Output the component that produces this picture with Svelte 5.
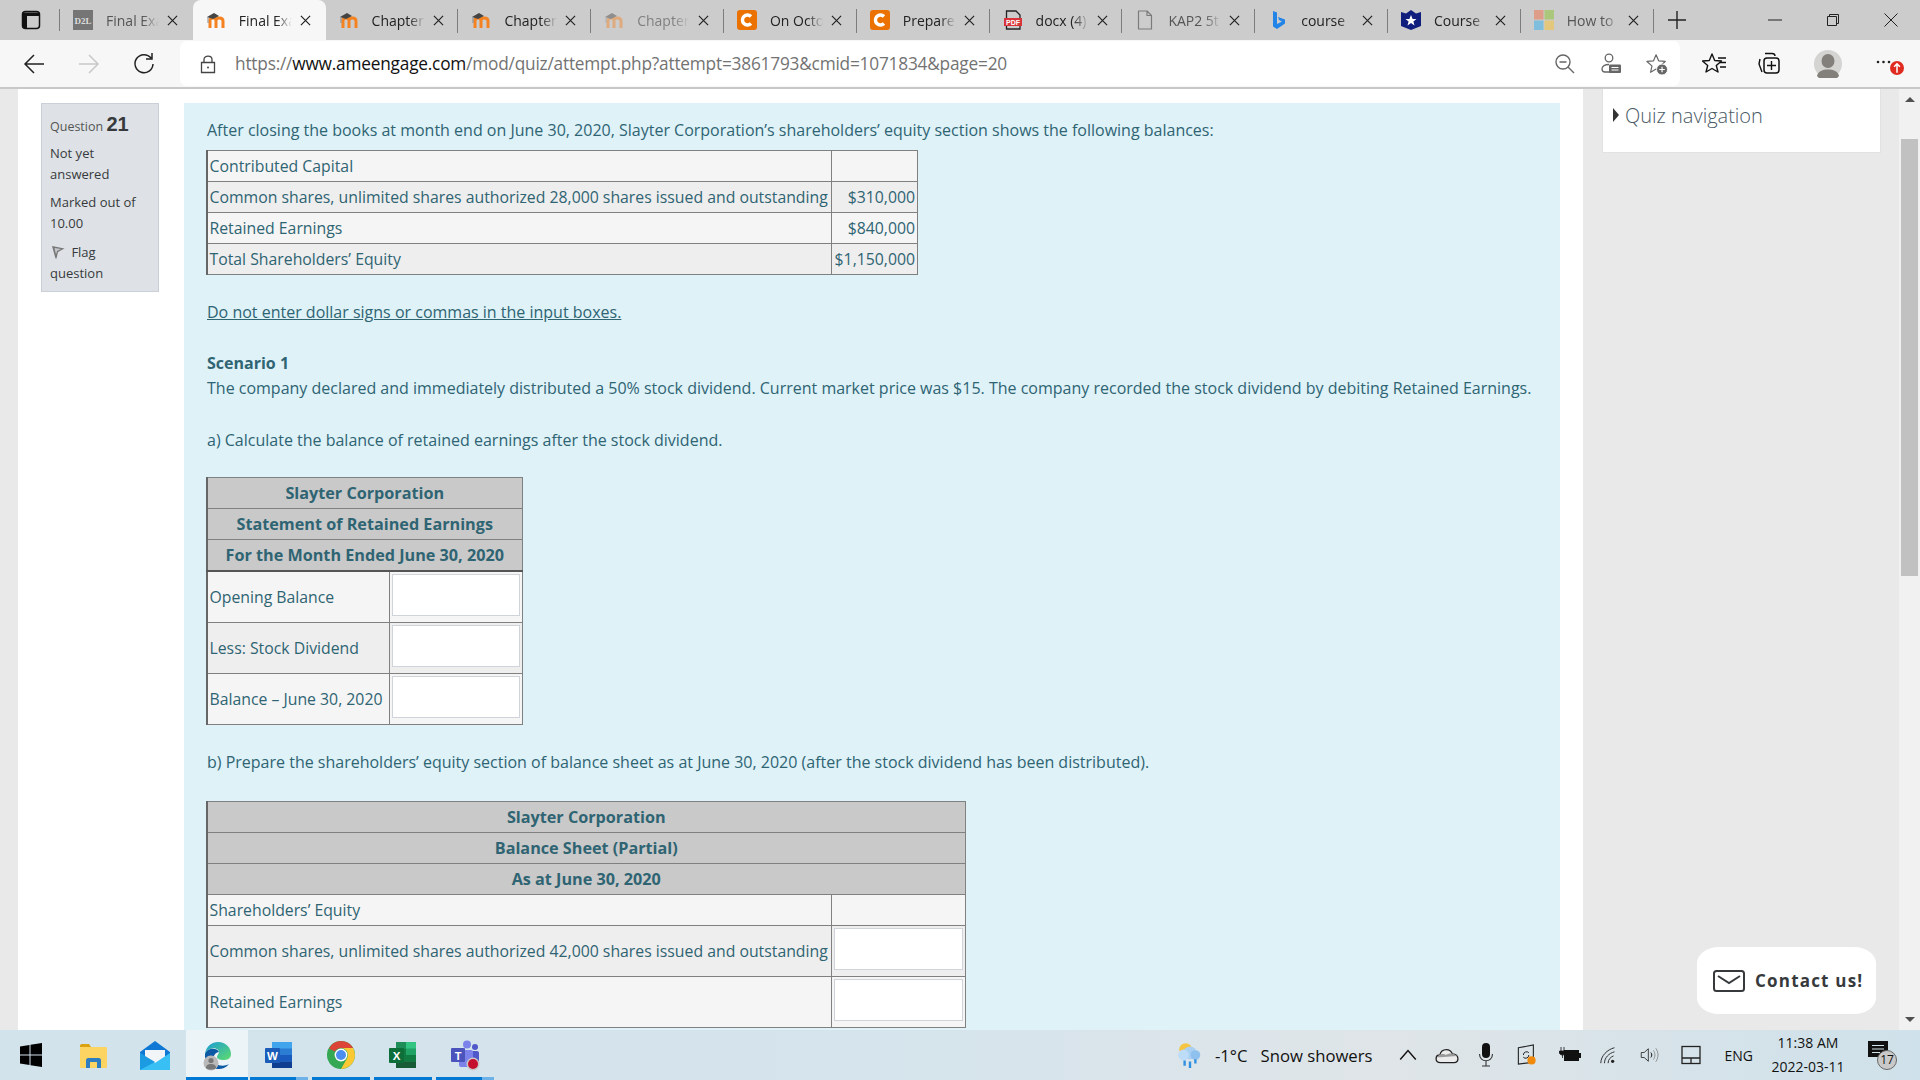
<script>
const tabs = [
  { icon: 'd2l', title: 'Final Exam', dim: true },
  { icon: 'moodle', title: 'Final Exam', active: true },
  { icon: 'moodle', title: 'Chapter' },
  { icon: 'moodle', title: 'Chapter' },
  { icon: 'moodle', title: 'Chapter', faded: true },
  { icon: 'chegg', title: 'On Octo' },
  { icon: 'chegg', title: 'Prepare' },
  { icon: 'pdf', title: 'docx (4)' },
  { icon: 'file', title: 'KAP2 5t', dim: true },
  { icon: 'bing', title: 'course' },
  { icon: 'shield', title: 'Course' },
  { icon: 'ms', title: 'How to', dim: true }
];
const apps = [
  { id: 'start' },
  { id: 'folder' },
  { id: 'mail' },
  { id: 'edge', bar: 'full', active: true },
  { id: 'word', bar: 'split' },
  { id: 'chrome', bar: 'full' },
  { id: 'excel', bar: 'full' },
  { id: 'teams', bar: 'split' }
];
</script>

{#snippet tabIcon(name)}
  <svg class="favicon" viewBox="0 0 20 20">
    {#if name === 'd2l'}
      <rect width="20" height="20" fill="#757575" />
      <text x="10" y="14" font-size="9" font-weight="700" fill="#ddd" text-anchor="middle" font-family="Liberation Serif">D2L</text>
    {:else if name === 'moodle'}
      <path d="M4 18V10.500C4 8.500 5.500 8 7 8C8.500 8 10 8.800 10 10.500V18M10 10.500C10 8.500 11.500 8 13.500 8C15.500 8 17 9 17 11V18" fill="none" stroke="#f58220" stroke-width="3" />
      <path d="M1 7L8 3L13 6L7 9Z" fill="#444" />
      <path d="M2 7V13" stroke="#888" stroke-width="1" />
    {:else if name === 'chegg'}
      <rect width="20" height="20" rx="3" fill="#eb7100" />
      <path d="M14 6.500A5 5 0 1 0 14 13.500" fill="none" stroke="#fff" stroke-width="3.400" />
    {:else if name === 'pdf'}
      <path d="M3.500 8V1H13L17 5V8M3.500 16V19H17V16" fill="none" stroke="#222" stroke-width="1.300" />
      <rect x="1" y="8" width="18" height="8" fill="#d8343a" />
      <text x="10" y="14.500" font-size="7" font-weight="700" fill="#fff" text-anchor="middle" font-family="Liberation Sans">PDF</text>
    {:else if name === 'file'}
      <path d="M3.500 1H12L16.500 5.500V19H3.500Z M12 1V5.500H16.500" fill="none" stroke="#7b7b7b" stroke-width="1.200" stroke-linejoin="round" />
    {:else if name === 'bing'}
      <path d="M5 1L9 2.500V14L14 11.500L11 10L10 7L17 9.500V13.500L9 19L5 16.500Z" fill="#2284e6" />
    {:else if name === 'shield'}
      <path d="M0 2L5 3.500L10 0L15 3.500L20 2V16L10 20L0 16Z" fill="#101f7d" />
      <path d="M10 5L11.600 9H15.500L12.400 11.500L13.500 15.500L10 13L6.500 15.500L7.600 11.500L4.500 9H8.400Z" fill="#fff" />
    {:else}
      <rect width="9.500" height="9.500" fill="#de9d89" />
      <rect x="10.500" width="9.500" height="9.500" fill="#abc77b" />
      <rect y="10.500" width="9.500" height="9.500" fill="#7fbedd" />
      <rect x="10.500" y="10.500" width="9.500" height="9.500" fill="#e3c77c" />
    {/if}
  </svg>
{/snippet}

{#snippet appIcon(id)}
  <svg class="appicon" viewBox="0 0 32 32">
    {#if id === 'start'}
      <path d="M5 7.500L14.500 6V15.500H5ZM15.500 5.800L27 4V15.500H15.500ZM5 16.500H14.500V26L5 24.500ZM15.500 16.500H27V28L15.500 26.200Z" fill="#000" />
    {:else if id === 'folder'}
      <path d="M3 7C3 5.500 4 5 5 5H12L14 8H3Z" fill="#dba10f" />
      <rect x="3" y="8" width="27" height="21" rx="1" fill="#fcd462" />
      <path d="M9 29V21C9 20 10 19 11 19H22C23 19 24 20 24 21V29H20V23H13V29Z" fill="#2d7dc0" />
    {:else if id === 'mail'}
      <path d="M1 13L16 2L31 13V20H1Z" fill="#0f78d4" />
      <path d="M6 11H26V18L16 24L6 18Z" fill="#f1f5f8" />
      <path d="M1 14L16 24L31 14V31H1Z" fill="#38c0f5" />
      <path d="M1 31L16 23L1 14Z" fill="#1a9be2" />
    {:else if id === 'edge'}
      <path d="M4 15C5 7 11 3 17 3C25 3 30 9 30 15C30 20 26 21 22 21C19 21 16 20 16 18C16 16 18 15 18 13C18 10 13 8 9 10C6 11.500 5 13 4 15Z" fill="url(#edgeTop)" />
      <path d="M4 15C3 23 10 30 17 30C21 30 25 29 28 25C23 28 15 27 13 22C11 17 15 13 18 13C16 9 7 8 4 15Z" fill="#0c59a4" />
      <circle cx="10" cy="24" r="7.500" fill="#b9b9b9" />
      <circle cx="10" cy="21.500" r="2.600" fill="#777" />
      <path d="M5 29C5 26 7 25 10 25C13 25 15 26 15 29C13 31 7 31 5 29Z" fill="#777" />
    {:else if id === 'word'}
      <path d="M9 3H29V29H9Z" fill="#41a5ee" />
      <rect x="9" y="9.500" width="20" height="6.500" fill="#2b7cd3" />
      <rect x="9" y="16" width="20" height="6.500" fill="#185abd" />
      <rect x="9" y="22.500" width="20" height="6.500" fill="#103f91" />
      <rect x="2" y="9" width="15" height="15" rx="1" fill="#1a5cb8" />
      <text x="9.500" y="21" font-size="11.500" font-weight="700" fill="#fff" text-anchor="middle" font-family="Liberation Sans">W</text>
    {:else if id === 'chrome'}
      <circle cx="16" cy="16" r="14" fill="#34a853" />
      <path d="M16 2A14 14 0 0 1 28.100 9H16A7 7 0 0 0 9.900 12.500L4 9.500A14 14 0 0 1 16 2Z" fill="#db4437" />
      <path d="M28.100 9A14 14 0 0 1 16 30L22 19.500A7 7 0 0 0 16 9Z" fill="#fcc934" />
      <circle cx="16" cy="16" r="6.400" fill="#fff" />
      <circle cx="16" cy="16" r="5" fill="#4a8cf0" />
    {:else if id === 'excel'}
      <path d="M9 3H29V29H9Z" fill="#21a366" />
      <rect x="9" y="3" width="10" height="6.500" fill="#185c37" opacity=".3" />
      <rect x="19" y="3" width="10" height="6.500" fill="#33c481" />
      <rect x="9" y="9.500" width="10" height="6.500" fill="#107c41" />
      <rect x="9" y="16" width="20" height="6.500" fill="#107c41" />
      <rect x="9" y="22.500" width="20" height="6.500" fill="#185c37" />
      <rect x="2" y="9" width="15" height="15" rx="1" fill="#0e6e39" />
      <text x="9.500" y="21" font-size="11.500" font-weight="700" fill="#fff" text-anchor="middle" font-family="Liberation Sans">X</text>
    {:else if id === 'teams'}
      <circle cx="18" cy="5.500" r="4" fill="#7b83eb" />
      <circle cx="26" cy="8" r="3" fill="#5059c9" />
      <rect x="20" y="12" width="10" height="12" rx="2" fill="#5059c9" />
      <rect x="10" y="11" width="14" height="17" rx="2" fill="#7b83eb" />
      <rect x="2" y="9" width="14" height="14" rx="1" fill="#4b53bc" />
      <text x="9" y="20.500" font-size="11" font-weight="700" fill="#fff" text-anchor="middle" font-family="Liberation Sans">T</text>
      <circle cx="24" cy="25" r="6.500" fill="#c8c8c8" />
      <circle cx="24" cy="25" r="5" fill="#c50f2e" />
    {/if}
  </svg>
{/snippet}

<div class="screen">
  <svg width="0" height="0" class="defs">
    <defs>
      <linearGradient id="edgeTop" x1="0" y1="0" x2="1" y2="1">
        <stop offset="0" stop-color="#1a9bd8" />
        <stop offset="1" stop-color="#5fdc6c" />
      </linearGradient>
    </defs>
  </svg>

  <header class="tabbar">
    <div class="tab-actions">
      <svg width="20" height="20" viewBox="0 0 20 20"><rect x="1.500" y="1.500" width="17" height="17" rx="3" fill="none" stroke="#111" stroke-width="1.500" /><path d="M2 2.500H18V6H6V18H2Z" fill="#111" /></svg>
    </div>
    {#each tabs as tab}
      <div class="tab" class:active={tab.active} class:faded={tab.faded} class:dim={tab.dim}>
        <span class="tab-fav">{@render tabIcon(tab.icon)}</span>
        <span class="tab-title">{tab.title}</span>
        <svg class="tab-close" viewBox="0 0 12 12"><path d="M1 1L11 11M11 1L1 11" stroke="#222" stroke-width="1.300" /></svg>
      </div>
    {/each}
    <div class="newtab">
      <svg width="18" height="18" viewBox="0 0 18 18"><path d="M9 0V18M0 9H18" stroke="#222" stroke-width="1.400" /></svg>
    </div>
    <div class="window-btns">
      <svg viewBox="0 0 14 14"><path d="M0 7H14" stroke="#222" stroke-width="1" /></svg>
      <svg viewBox="0 0 14 14"><path d="M3.500 3V1.500H12.500V10.500H11M1.500 3.500H10.500V12.500H1.500Z" fill="none" stroke="#222" stroke-width="1" /></svg>
      <svg viewBox="0 0 14 14"><path d="M0.500 0.500L13.500 13.500M13.500 0.500L0.500 13.500" stroke="#222" stroke-width="1" /></svg>
    </div>
  </header>

  <nav class="toolbar">
    <div class="nav-btns">
      <svg viewBox="0 0 22 22"><path d="M21 11H2M11 2L2 11L11 20" fill="none" stroke="#222" stroke-width="1.500" /></svg>
      <svg viewBox="0 0 22 22"><path d="M1 11H20M11 2L20 11L11 20" fill="none" stroke="#c9c9c9" stroke-width="1.500" /></svg>
      <svg viewBox="0 0 22 22"><path d="M18 5A9 9 0 1 0 20 11M19 0V6H13" fill="none" stroke="#222" stroke-width="1.500" /></svg>
    </div>
    <div class="addressbar">
      <svg class="lock" viewBox="0 0 16 20"><path d="M4 9V5.500C4 1 12 1 12 5.500V9M1.500 8.500H14.500V18.500H1.500Z" fill="none" stroke="#444" stroke-width="1.300" /><circle cx="8" cy="13.500" r="1" fill="#444" /></svg>
      <span class="url"><span>https://</span><b>www.ameengage.com</b><span>/mod/quiz/attempt.php?attempt=3861793&amp;cmid=1071834&amp;page=20</span></span>
      <div class="addr-icons">
        <svg viewBox="0 0 22 22"><circle cx="9" cy="9" r="7" fill="none" stroke="#666" stroke-width="1.400" /><path d="M5.500 9H12.500M14 14L20 20" stroke="#666" stroke-width="1.400" /></svg>
        <svg viewBox="0 0 22 22"><circle cx="9" cy="5" r="3.800" fill="none" stroke="#666" stroke-width="1.300" /><path d="M9 11.500C5 11.500 2 13 2 16C2 18 3 19 5 19H10" fill="none" stroke="#666" stroke-width="1.300" /><rect x="9" y="11.500" width="12" height="8.500" rx="1" fill="#666" /><path d="M11.500 14.500H18.500M11.500 17H18.500" stroke="#fff" /></svg>
        <svg viewBox="0 0 24 24"><path d="M11 2L13.800 8.500L21 9.200L15.500 14L17 21L11 17.500L5 21L6.500 14L1 9.200L8.200 8.500Z" fill="none" stroke="#666" stroke-width="1.300" stroke-linejoin="round" /><circle cx="17.500" cy="18" r="6" fill="#666" stroke="#fff" stroke-width="1" /><path d="M17.500 15V21M14.500 18H20.500" stroke="#fff" stroke-width="1.300" /></svg>
      </div>
    </div>
    <div class="browser-icons">
      <svg viewBox="0 0 24 24"><path d="M10 2L12.700 8.500L19.500 9L14.300 13.500L16 20L10 16.500L4 20L5.700 13.500L0.500 9L7.300 8.500Z" fill="#f7f7f7" stroke="#111" stroke-width="1.400" stroke-linejoin="round" /><path d="M16 6H24M18 10.500H24M18 15H24" stroke="#111" stroke-width="1.300" /></svg>
      <svg viewBox="0 0 24 24"><path d="M8 1.500H15C17 1.500 18 3 18 4M3 7L2 12L5 20" fill="none" stroke="#111" stroke-width="1.400" /><rect x="7" y="6" width="15" height="15" rx="3" fill="none" stroke="#111" stroke-width="1.500" /><path d="M14.500 9V18M10 13.500H19" stroke="#111" stroke-width="1.400" /></svg>
      <div class="avatar"><svg viewBox="0 0 28 28"><circle cx="14" cy="14" r="14" fill="#d4d4d2" /><ellipse cx="14" cy="11" rx="6.500" ry="7" fill="#837f7a" /><path d="M3 26C4 21 9 19.500 14 19.500C19 19.500 24 21 25 26A14 14 0 0 1 3 26Z" fill="#837f7a" /></svg></div>
      <div class="more">
        <svg class="dots" viewBox="0 0 16 4"><circle cx="2" cy="2" r="1.300" fill="#222" /><circle cx="7.500" cy="2" r="1.300" fill="#222" /><circle cx="13" cy="2" r="1.300" fill="#222" /></svg>
        <span class="update"><svg viewBox="0 0 12 12"><path d="M6 10V3M3.500 5L6 2.500L8.500 5" fill="none" stroke="#fff" stroke-width="1.300" /></svg></span>
      </div>
    </div>
  </nav>

  <div class="viewport">
    <div class="gutter"></div>
    <main class="page">
      <aside class="qinfo">
        <h3 class="qno">Question <b>21</b></h3>
        <div class="state">Not yet answered</div>
        <div class="grade">Marked out of 10.00</div>
        <div class="flag">
          <svg viewBox="0 0 14 14"><path d="M1 1L13.500 3.500L7 7L5.500 13.500L4.500 13.500Z" fill="#777" /><path d="M3.500 3L10 4L6 6L5 9.500Z" fill="#c4c8cc" /></svg>
          Flag question
        </div>
      </aside>

      <section class="formulation">
        <p class="intro">After closing the books at month end on June 30, 2020, Slayter Corporation’s shareholders’ equity section shows the following balances:</p>
        <table class="t1">
          <tbody>
            <tr><td class="wide">Contributed Capital</td><td class="amt"></td></tr>
            <tr><td>Common shares, unlimited shares authorized 28,000 shares issued and outstanding</td><td class="amt">$310,000</td></tr>
            <tr><td>Retained Earnings</td><td class="amt">$840,000</td></tr>
            <tr><td>Total Shareholders’ Equity</td><td class="amt">$1,150,000</td></tr>
          </tbody>
        </table>
        <p class="warn"><u>Do not enter dollar signs or commas in the input boxes.</u></p>
        <p class="scenario"><b>Scenario 1</b><br />The company declared and immediately distributed a 50% stock dividend. Current market price was $15. The company recorded the stock dividend by debiting Retained Earnings.</p>
        <p class="part-a">a) Calculate the balance of retained earnings after the stock dividend.</p>
        <table class="t2">
          <thead>
            <tr><th colspan="2">Slayter Corporation</th></tr>
            <tr><th colspan="2">Statement of Retained Earnings</th></tr>
            <tr><th colspan="2">For the Month Ended June 30, 2020</th></tr>
          </thead>
          <tbody>
            <tr><td>Opening Balance</td><td class="box"><input type="text" /></td></tr>
            <tr><td>Less: Stock Dividend</td><td class="box"><input type="text" /></td></tr>
            <tr><td>Balance – June 30, 2020</td><td class="box"><input type="text" /></td></tr>
          </tbody>
        </table>
        <p class="part-b">b) Prepare the shareholders’ equity section of balance sheet as at June 30, 2020 (after the stock dividend has been distributed).</p>
        <table class="t3">
          <thead>
            <tr><th colspan="2">Slayter Corporation</th></tr>
            <tr><th colspan="2">Balance Sheet (Partial)</th></tr>
            <tr><th colspan="2">As at June 30, 2020</th></tr>
          </thead>
          <tbody>
            <tr><td>Shareholders’ Equity</td><td></td></tr>
            <tr class="tall"><td>Common shares, unlimited shares authorized 42,000 shares issued and outstanding</td><td class="box"><input type="text" /></td></tr>
            <tr class="tall"><td>Retained Earnings</td><td class="box"><input type="text" /></td></tr>
          </tbody>
        </table>
      </section>
    </main>
    <aside class="side">
      <div class="quiznav"><span class="caret"></span>Quiz navigation</div>
    </aside>
    <div class="scrollbar">
      <span class="arrow up"></span>
      <div class="thumb"></div>
      <span class="arrow down"></span>
    </div>
    <div class="contact">
      <svg viewBox="0 0 32 22"><rect x="1" y="1" width="30" height="20" rx="2.500" fill="none" stroke="#373a3c" stroke-width="2" /><path d="M5 6L16 13L27 6" fill="none" stroke="#373a3c" stroke-width="2" /></svg>
      <span>Contact us!</span>
    </div>
  </div>

  <footer class="taskbar">
    <div class="apps">
      {#each apps as app}
        <div class="app" class:active={app.active}>
          {@render appIcon(app.id)}
          {#if app.bar}<i class="runbar" class:split={app.bar === 'split'}></i>{/if}
        </div>
      {/each}
    </div>
    <div class="tray">
      <svg class="weather" viewBox="0 0 26 26"><circle cx="9" cy="8" r="6" fill="#f5c542" /><circle cx="13" cy="11" r="6" fill="#a9cff2" /><circle cx="7" cy="13" r="5" fill="#bcdcf7" /><circle cx="18" cy="13" r="4.500" fill="#8fc1ee" /><path d="M8 18V23M13 19V25M18 17V21" stroke="#2f8fe0" stroke-width="2.200" /></svg>
      <span class="temp">-1°C</span>
      <span class="cond">Snow showers</span>
      <svg class="t chev" viewBox="0 0 18 18"><path d="M2 13L9 5L16 13" fill="none" stroke="#111" stroke-width="1.300" /></svg>
      <svg class="t cloud" viewBox="0 0 22 18"><path d="M5 16C2 16 1 14 1 12.500C1 10 3 9 4.500 9C5 6 7.500 4 10.500 4C13 4 15 5.500 16 8C19 8 21 10 21 12.500C21 14.500 19.500 16 17.500 16Z" fill="#ececec" stroke="#222" stroke-width="1.200" /><path d="M2 11C4 7 8 8 10 9C13 7 17 7 20 10L5 11Z" fill="#9a9a9a" /></svg>
      <svg class="t mic" viewBox="0 0 18 24"><rect x="5" y="0" width="8" height="15" rx="4" fill="#111" /><path d="M2.500 11C2.500 20 15.500 20 15.500 11M9 18V23M5 23H13" fill="none" stroke="#333" stroke-width="1.100" /></svg>
      <svg class="t sync" viewBox="0 0 22 24"><path d="M1.500 4L18 1V20L1.500 22Z" fill="none" stroke="#222" stroke-width="1.200" /><path d="M7 12A3.500 3.500 0 0 1 13 9.500M13 12A3.500 3.500 0 0 1 7 14.500" fill="none" stroke="#222" stroke-width="1.100" /><circle cx="16" cy="18" r="4.500" fill="#f08a0c" /></svg>
      <svg class="t batt" viewBox="0 0 24 18"><path d="M3 1V5M6 1V5M1.500 5H7.500V7C7.500 8 6 9 4.500 9C3 9 1.500 8 1.500 7ZM4.500 9V12" fill="#111" stroke="#111" stroke-width=".8" /><rect x="6" y="4" width="15" height="11" fill="#111" /><rect x="21" y="7" width="2" height="5" fill="#111" /></svg>
      <svg class="t wifi" viewBox="0 0 22 22"><path d="M2 20C2 12 9 5 17 3M6 20C6 14 11 9 17 7.500M10 20C10 16 13 13 16 12" fill="none" stroke="#333" stroke-width="1.100" /><circle cx="15" cy="18" r="1.800" fill="#222" /></svg>
      <svg class="t vol" viewBox="0 0 24 20"><path d="M1.500 7H5L10 2.500V17.500L5 13H1.500Z" fill="none" stroke="#333" stroke-width="1.100" /><path d="M13 7C14.500 9 14.500 11 13 13" fill="none" stroke="#111" stroke-width="1.200" /><path d="M16 4.500C18.500 8 18.500 12 16 15.500M19 2C22.500 7 22.500 13 19 18" fill="none" stroke="#888" stroke-width="1.100" /></svg>
      <svg class="t pad" viewBox="0 0 20 20"><rect x="1" y="1.500" width="18" height="17" fill="none" stroke="#222" stroke-width="1.300" /><path d="M1 13H19M10 13V18" stroke="#222" stroke-width="1.300" /></svg>
      <span class="eng">ENG</span>
      <div class="clock"><span>11:38 AM</span><span>2022-03-11</span></div>
      <div class="notify">
        <svg viewBox="0 0 22 22"><path d="M1 1H21V17H1Z" fill="#111" /><path d="M5 5.500H17M5 9H17M5 12.500H13" stroke="#d3e3ec" stroke-width="1.200" /></svg>
        <span class="count">17</span>
      </div>
    </div>
  </footer>
</div>

<style>
:global(body) {
  margin: 0;
  background: #fff;
}

* {
  box-sizing: border-box;
}

.defs {
  position: absolute;
}

.screen {
  width: 1920px;
  height: 1080px;
  display: flex;
  flex-direction: column;
  overflow: hidden;
  font-family: "Open Sans", "Noto Sans", sans-serif;
}

/* tab strip */
.tabbar {
  height: 40px;
  flex: none;
  display: flex;
  align-items: stretch;
  background: #cccccc;
}

.tab-actions {
  width: 60px;
  display: flex;
  align-items: center;
  padding-left: 21px;
  border-right: 1px solid #7d7d7d;
  margin: 9px 0;
}

.tab {
  width: 132.8px;
  display: flex;
  align-items: center;
  padding: 0 13px 0 13px;
  font-size: 14px;
  color: #222;
  position: relative;
}

.tab::after {
  content: "";
  position: absolute;
  right: 0;
  top: 9px;
  bottom: 7px;
  width: 1px;
  background: #7d7d7d;
}

.tab:nth-child(2)::after,
.tab.active::after {
  display: none;
}

.tab.active {
  background: #f7f7f7;
  border-radius: 8px 8px 0 0;
}

.tab.faded .tab-fav,
.tab.faded .tab-title {
  opacity: 0.45;
}

.tab.dim .tab-title {
  color: #555;
}

.tab-fav {
  width: 33px;
  flex: none;
  display: flex;
}

.favicon {
  width: 20px;
  height: 20px;
}

.tab-title {
  width: 53px;
  margin-right: 8px;
  flex: none;
  white-space: nowrap;
  overflow: hidden;
  -webkit-mask-image: linear-gradient(90deg, #000 70%, transparent 100%);
  mask-image: linear-gradient(90deg, #000 70%, transparent 100%);
}

.tab-close {
  width: 11px;
  height: 11px;
  flex: none;
}

.newtab {
  width: 46px;
  display: flex;
  align-items: center;
  justify-content: center;
}

.window-btns {
  margin-left: auto;
  display: flex;
  align-items: center;
  gap: 44px;
  padding-right: 22px;
}

.window-btns svg {
  width: 14px;
  height: 14px;
}

/* toolbar */
.toolbar {
  height: 49px;
  flex: none;
  display: flex;
  align-items: center;
  background: #f7f7f7;
  border-bottom: 2px solid #c8c8c8;
}

.nav-btns {
  width: 180px;
  flex: none;
  display: flex;
  align-items: center;
  gap: 33px;
  padding-left: 23px;
}

.nav-btns svg {
  width: 22px;
  height: 22px;
}

.addressbar {
  width: 1500px;
  height: 45px;
  flex: none;
  display: flex;
  align-items: center;
  background: #fff;
  border-radius: 7px;
  padding: 0 12px 0 20px;
}

.lock {
  width: 16px;
  height: 20px;
  margin-right: 19px;
}

.url {
  font-size: 17.25px;
  color: #737373;
  letter-spacing: -0.2px;
  white-space: nowrap;
}

.url b {
  font-weight: 400;
  color: #111;
}

.addr-icons {
  margin-left: auto;
  display: flex;
  align-items: center;
  gap: 24px;
}

.addr-icons svg {
  width: 22px;
  height: 22px;
}

.browser-icons {
  display: flex;
  align-items: center;
  gap: 31px;
  padding-left: 22px;
}

.browser-icons > svg {
  width: 24px;
  height: 24px;
}

.avatar {
  width: 28px;
  height: 28px;
  margin-left: 2px;
}

.more {
  position: relative;
  width: 36px;
  height: 24px;
}

.dots {
  position: absolute;
  left: 3px;
  top: 8px;
  width: 16px;
  height: 4px;
}

.update {
  position: absolute;
  left: 17px;
  top: 9px;
  width: 14px;
  height: 14px;
  border-radius: 50%;
  background: #e02b20;
  display: flex;
}

/* page */
.viewport {
  flex: 1;
  min-height: 0;
  display: flex;
  position: relative;
  overflow: hidden;
}

.gutter {
  width: 18px;
  flex: none;
  background: #e9e9e9;
}

.page {
  width: 1565px;
  flex: none;
  display: flex;
  align-items: flex-start;
  gap: 25px;
  padding: 14px 23px 0 23px;
  background: #fff;
}

.qinfo {
  width: 118px;
  flex: none;
  padding: 8px 8px 8px;
  background: #dee2e6;
  border: 1px solid #cad0d7;
  font-size: 13px;
  line-height: 20.5px;
  color: #373a3c;
}

.qno {
  margin: 0 0 4px;
  font-size: 12.5px;
  font-weight: 400;
  line-height: 25px;
  color: #555;
}

.qno b {
  font-family: "Liberation Sans", sans-serif;
  font-size: 20px;
  color: #373a3c;
}

.state {
  margin-bottom: 8px;
}

.grade {
  margin-bottom: 9px;
}

.flag svg {
  width: 14px;
  height: 14px;
  margin: 0 3px 0 1px;
  vertical-align: -2px;
}

.formulation {
  flex: 1;
  align-self: stretch;
  padding: 15px 23px;
  background: #def2f8;
  color: #2f6473;
  font-size: 16px;
  line-height: 25px;
}

p {
  margin: 0;
}

.warn {
  margin-top: 25px;
}

.scenario {
  margin-top: 26px;
}

.part-a {
  margin-top: 27px;
}

.part-b {
  margin-top: 25px;
}

table {
  border-collapse: collapse;
  border-left: 2px solid #666;
  margin-left: -1px;
}

.t1 {
  width: 712px;
  margin-top: 7px;
}

.t2 {
  width: 317px;
  margin-top: 24px;
}

.t3 {
  width: 760px;
  margin-top: 26px;
}

td, th {
  border: 1px solid #808080;
  padding: 0 2px 0 1.5px;
  height: 31px;
  font-size: 15.8px;
  line-height: 24px;
  white-space: nowrap;
}

th {
  background: #c9c9c9;
  font-size: 16.2px;
  font-weight: 700;
  text-align: center;
}

tbody tr:nth-child(odd) td {
  background: #f5f5f5;
}

tbody tr:nth-child(even) td {
  background: #eeeeee;
}

.amt {
  width: 86px;
  text-align: right;
}

.t2 thead tr:last-child th {
  border-bottom: 2px solid #555;
}

.t2 td {
  height: 51px;
  width: 183px;
}

.t2 td.box {
  width: 134px;
}

.t3 td:last-child {
  width: 134px;
}

.t3 .tall td {
  height: 51px;
}

.box {
  padding: 2px;
}

input {
  display: block;
  width: 100%;
  height: 42px;
  margin-bottom: 4px;
  padding: 0;
  border: 1px solid #ced4da;
  background: #fff;
}

/* right column */
.side {
  width: 316px;
  flex: none;
  padding: 0 0 0 19px;
  background: #e9e9e9;
}

.quiznav {
  width: 279px;
  height: 64px;
  padding: 0 0 11px 10px;
  display: flex;
  align-items: center;
  background: #fff;
  border: 1px solid #e2e2e2;
  border-top: 0;
  font-size: 20px;
  font-weight: 300;
  color: #4a5a66;
}

.caret {
  width: 0;
  height: 0;
  margin-right: 6px;
  border-left: 6px solid #333;
  border-top: 7px solid transparent;
  border-bottom: 7px solid transparent;
}

.scrollbar {
  flex: 1;
  display: flex;
  flex-direction: column;
  align-items: center;
  background: #f1f1f1;
}

.thumb {
  width: 17px;
  height: 437px;
  margin-top: 37px;
  background: #c1c1c1;
}

.arrow {
  width: 0;
  height: 0;
  border-left: 5px solid transparent;
  border-right: 5px solid transparent;
}

.arrow.up {
  margin-top: 8px;
  border-bottom: 5px solid #505050;
}

.arrow.down {
  margin-top: auto;
  margin-bottom: 8px;
  border-top: 5px solid #505050;
}

.contact {
  position: absolute;
  left: 1697px;
  top: 858px;
  width: 179px;
  height: 67px;
  display: flex;
  align-items: center;
  gap: 10px;
  padding-left: 16px;
  background: #fff;
  border-radius: 22px / 16px;
  font-size: 17px;
  font-weight: 700;
  letter-spacing: 1.2px;
  color: #373a3c;
}

.contact svg {
  width: 32px;
  height: 22px;
}

/* taskbar */
.taskbar {
  height: 50px;
  flex: none;
  display: flex;
  justify-content: space-between;
  background: linear-gradient(90deg, #d2e3ec, #d6e4ec 50%, #dfe5e8 72%, #cfe1ea);
}

.apps {
  display: flex;
}

.app {
  width: 62px;
  position: relative;
  display: flex;
  align-items: center;
  justify-content: center;
}

.app.active {
  background: #edf4f8;
}

.appicon {
  width: 32px;
  height: 32px;
}

.runbar {
  position: absolute;
  left: 2px;
  right: 2px;
  bottom: 0;
  height: 3px;
  background: #0078d4;
}

.app.active .runbar {
  left: 0;
  right: 0;
}

.runbar.split {
  background: linear-gradient(90deg, #0078d4 80%, #6cb2e8 80%);
}

.tray {
  display: flex;
  align-items: center;
  padding-right: 25px;
  font-size: 15px;
  color: #111;
}

.weather {
  width: 28px;
  height: 28px;
  margin-right: 11px;
}

.temp {
  margin-right: 13px;
  font-size: 16.7px;
}

.cond {
  margin-right: 25px;
  font-size: 16.7px;
}

.t {
  width: 20px;
  height: 20px;
  margin-right: 21px;
}

.chev {
  margin-right: 17px;
}

.cloud {
  width: 24px;
  margin-right: 17px;
}

.batt {
  width: 24px;
  margin-right: 17px;
}

.pad {
  margin-right: 24px;
}

.mic {
  height: 24px;
}

.sync {
  height: 24px;
}

.eng {
  margin-right: 10px;
  font-size: 14px;
}

.clock {
  display: flex;
  flex-direction: column;
  align-items: center;
  width: 90px;
  margin-right: 14px;
  font-size: 14px;
  line-height: 24px;
}

.notify {
  position: relative;
  width: 28px;
  height: 30px;
}

.notify svg {
  width: 22px;
  height: 22px;
}

.count {
  position: absolute;
  left: 10px;
  top: 10px;
  width: 20px;
  height: 20px;
  border: 1px solid #666;
  border-radius: 50%;
  background: #c9c9c9;
  text-align: center;
  font-size: 12px;
  line-height: 18px;
}
</style>
